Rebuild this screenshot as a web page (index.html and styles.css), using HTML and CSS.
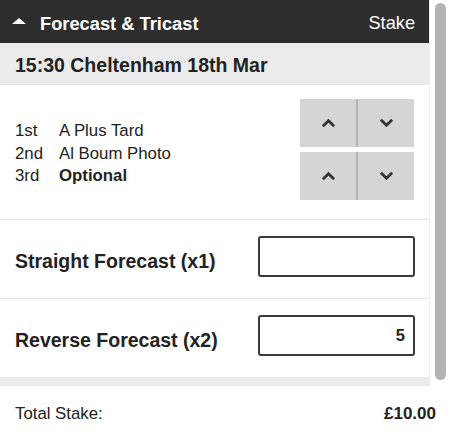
FILE: index.html
```html
<!DOCTYPE html>
<html>
<head>
<meta charset="utf-8">
<link rel="stylesheet" href="styles.css">
</head>
<body>
<div class="scroller">
  <div class="content">
    <div class="topbar">
      <span class="caret"></span>
      <span class="title">Forecast &amp; Tricast</span>
      <span class="stake">Stake</span>
    </div>
    <div class="race">15:30 Cheltenham 18th Mar</div>
    <div class="selections">
      <div class="runners">
        <div class="runner"><span class="pos">1st</span><span>A Plus Tard</span></div>
        <div class="runner"><span class="pos">2nd</span><span>Al Boum Photo</span></div>
        <div class="runner"><span class="pos">3rd</span><span class="opt">Optional</span></div>
      </div>
      <div class="movers">
        <div class="mover">
          <div class="btn"><svg class="chev" viewBox="0 0 16 10"><path d="M2 8.5 L8 2.5 L14 8.5" fill="none" stroke="#333" stroke-width="3"/></svg></div>
          <div class="btn"><svg class="chev" viewBox="0 0 16 10"><path d="M2 1.5 L8 7.5 L14 1.5" fill="none" stroke="#333" stroke-width="3"/></svg></div>
        </div>
        <div class="mover">
          <div class="btn"><svg class="chev" viewBox="0 0 16 10"><path d="M2 8.5 L8 2.5 L14 8.5" fill="none" stroke="#333" stroke-width="3"/></svg></div>
          <div class="btn"><svg class="chev" viewBox="0 0 16 10"><path d="M2 1.5 L8 7.5 L14 1.5" fill="none" stroke="#333" stroke-width="3"/></svg></div>
        </div>
      </div>
    </div>
    <div class="bet">
      <span class="label">Straight Forecast (x1)</span>
      <div class="input"></div>
    </div>
    <div class="bet">
      <span class="label">Reverse Forecast (x2)</span>
      <div class="input">5</div>
    </div>
    <div class="band"></div>
  </div>
  <div class="track"><div class="thumb"></div></div>
</div>
<div class="total">
  <span>Total Stake:</span>
  <span class="amount">£10.00</span>
</div>
</body>
</html>
```
FILE: styles.css
```css
* { box-sizing: border-box; }
html, body { margin: 0; padding: 0; }
body {
  width: 450px;
  height: 441px;
  overflow: hidden;
  background: #fff;
  font-family: "Liberation Sans", Arial, sans-serif;
  color: #222;
}
.scroller {
  display: flex;
  height: 386px;
}
.content {
  width: 429px;
  display: flex;
  flex-direction: column;
}
.topbar {
  height: 43px;
  background: #2d2d2d;
  color: #fff;
  display: flex;
  align-items: center;
  padding: 4px 14px 0 12px;
}
.caret {
  width: 0;
  height: 0;
  border-left: 7px solid transparent;
  border-right: 7px solid transparent;
  border-bottom: 6px solid #fff;
  margin-right: 14px;
  margin-top: -5px;
}
.title {
  font-weight: bold;
  font-size: 18.3px;
  flex: 1;
}
.stake {
  font-size: 18.2px;
}
.race {
  height: 42px;
  background: #ebebeb;
  font-weight: bold;
  font-size: 19.5px;
  display: flex;
  align-items: center;
  padding-left: 15px;
  padding-top: 2px;
}
.selections {
  height: 135px;
  display: flex;
  align-items: center;
  justify-content: space-between;
  padding: 0 15px;
  border-bottom: 1px solid #e3e3e3;
}
.runners {
  font-size: 16.8px;
  line-height: 22.5px;
  padding-top: 4px;
}
.runner { display: flex; }
.pos { width: 44px; }
.opt { font-weight: bold; }
.movers {
  display: flex;
  flex-direction: column;
  gap: 5px;
  margin-bottom: 6px;
}
.mover {
  display: flex;
  gap: 2px;
  background: #b5b5b5;
}
.btn {
  width: 56px;
  height: 48px;
  background: #d5d5d5;
  display: flex;
  align-items: center;
  justify-content: center;
}
.chev {
  display: block;
  width: 15px;
  height: 10px;
}
.bet {
  height: 79px;
  display: flex;
  align-items: center;
  justify-content: space-between;
  padding: 0 14px 0 15px;
  border-bottom: 1px solid #e3e3e3;
}
.bet:last-of-type { border-bottom: none; }
.label {
  font-weight: bold;
  font-size: 19.5px;
  color: #222;
  margin-top: 5px;
}
.input {
  width: 157px;
  height: 41px;
  border: 2px solid #3a3a3a;
  border-radius: 3px;
  display: flex;
  align-items: center;
  justify-content: flex-end;
  padding-right: 8px;
  font-weight: bold;
  font-size: 16.5px;
  margin-bottom: 6px;
}
.band {
  flex: 1;
  background: #ebebeb;
  margin-top: -1px;
}
.track {
  width: 21px;
  border-left: 1px solid #ececec;
  padding: 3px 4px 6px 5px;
  display: flex;
}
.thumb {
  flex: 1;
  background: #b3b3b3;
  border-radius: 6px;
}
.total {
  height: 55px;
  display: flex;
  align-items: center;
  justify-content: space-between;
  padding: 0 14px 0 15px;
  font-size: 16.8px;
  color: #222;
}
.amount { font-weight: bold; font-size: 17px; }
```
